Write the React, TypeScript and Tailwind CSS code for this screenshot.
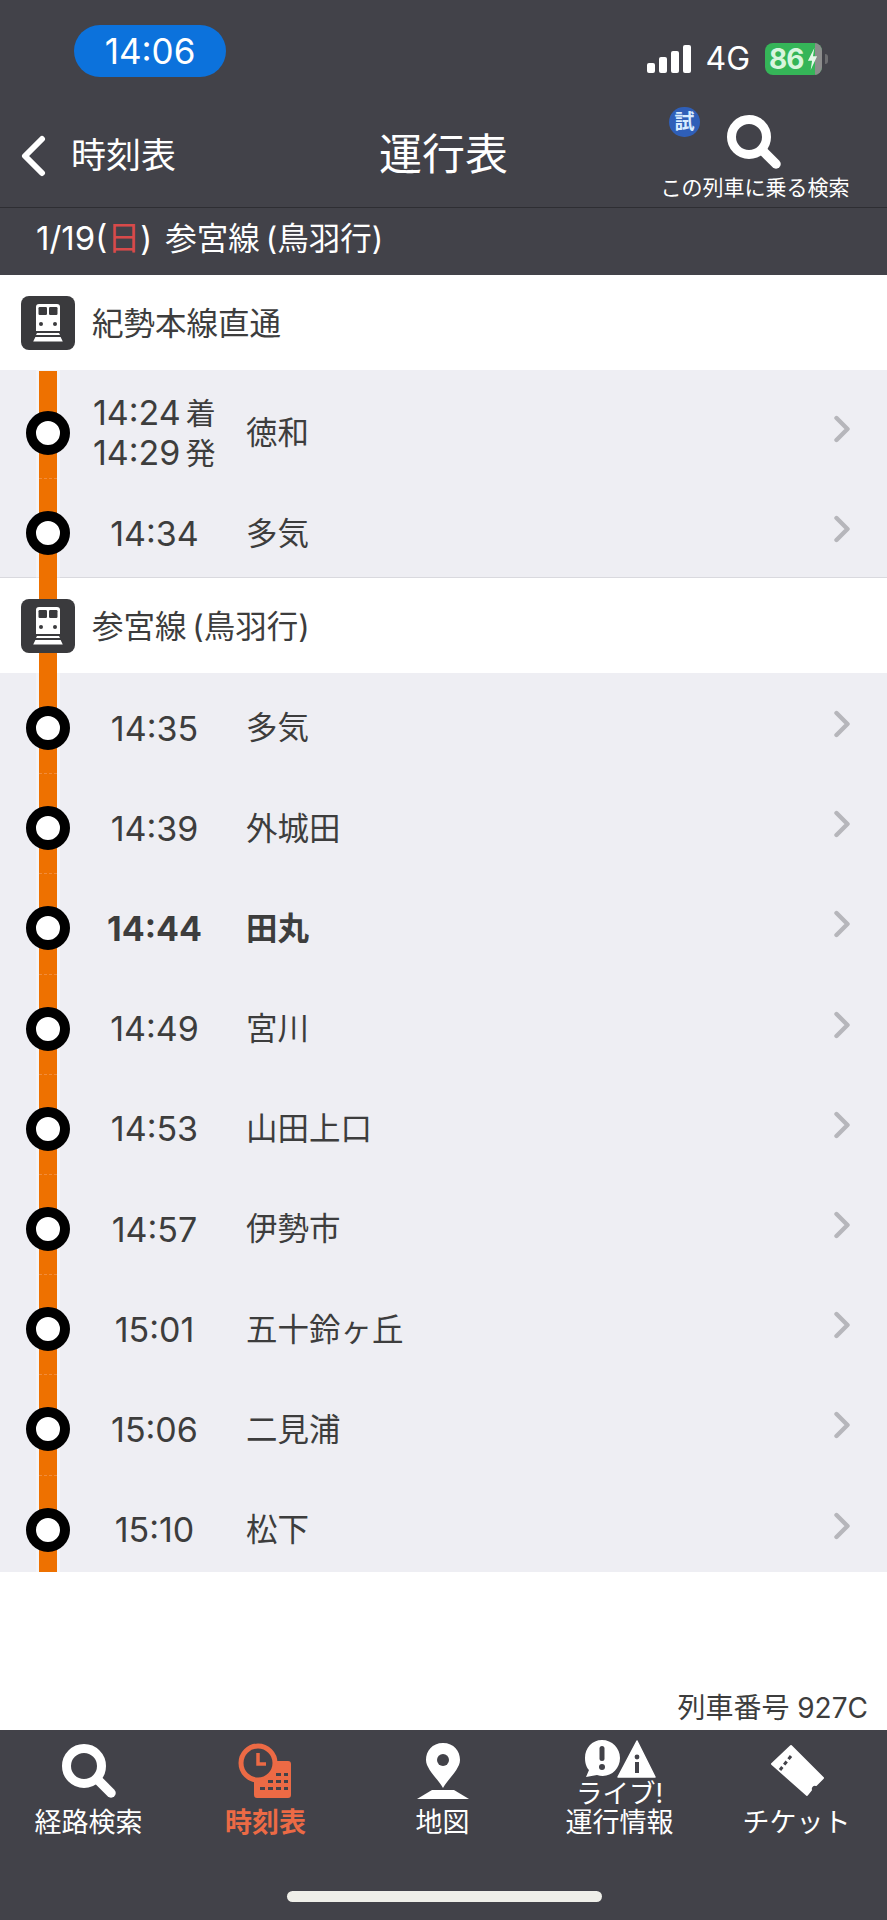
import { ReactNode } from 'react';

type Stop = { time?: string; arr?: string; dep?: string; name: string; bold?: boolean };

const firstStops: Stop[] = [
  { arr: '14:24', dep: '14:29', name: '徳和' },
  { time: '14:34', name: '多気' },
];

const secondStops: Stop[] = [
  { time: '14:35', name: '多気' },
  { time: '14:39', name: '外城田' },
  { time: '14:44', name: '田丸', bold: true },
  { time: '14:49', name: '宮川' },
  { time: '14:53', name: '山田上口' },
  { time: '14:57', name: '伊勢市' },
  { time: '15:01', name: '五十鈴ヶ丘' },
  { time: '15:06', name: '二見浦' },
  { time: '15:10', name: '松下' },
];

function SearchIcon({ className }: { className?: string }) {
  return (
    <svg viewBox="0 0 56 56" className={className}>
      <circle cx="23" cy="23" r="17.5" fill="none" stroke="#ffffff" strokeWidth="9" />
      <path d="M36 36 L50 50" stroke="#ffffff" strokeWidth="9.5" strokeLinecap="round" />
    </svg>
  );
}

function TrainIcon() {
  return (
    <div className="relative z-20 flex h-[54px] w-[54px] shrink-0 items-center justify-center rounded-[8px] bg-[#3a3a3d]">
      <svg viewBox="0 0 30 38" className="h-[38px] w-[30px]">
        <path d="M3 3a3 3 0 0 1 3-3h18a3 3 0 0 1 3 3V27H3Z" fill="#fff" />
        <rect x="5.5" y="3" width="8.5" height="8" rx="1.2" fill="#3a3a3d" />
        <rect x="16" y="3" width="8.5" height="8" rx="1.2" fill="#3a3a3d" />
        <circle cx="8" cy="20" r="2" fill="#3a3a3d" />
        <circle cx="22" cy="20" r="2" fill="#3a3a3d" />
        <path d="M4 29h22l1 2H3Z M2.4 33h25.2l2.2 4.5H0.2Z" fill="#fff" />
      </svg>
    </div>
  );
}

function Chevron() {
  return (
    <svg viewBox="0 0 18 28" className="h-[28px] w-[18px]">
      <path d="M3.5 3 L14.5 14 L3.5 25" fill="none" stroke="#b6b6bb" strokeWidth="4.4" strokeLinecap="round" strokeLinejoin="round" />
    </svg>
  );
}

function StopRow({ stop, last }: { stop: Stop; last?: boolean }) {
  const weight = stop.bold ? 'font-bold' : 'font-normal';
  return (
    <div className="relative flex h-[100.2px] items-center">
      <div className="relative z-20 ml-[26px] h-[44px] w-[44px] shrink-0 rounded-full border-[10px] border-black bg-white" />
      {!last && <div className="absolute bottom-[4px] left-[39px] z-20 w-[18px] border-t border-dashed border-[#f28c3a]" />}
      {stop.time ? (
        <div className={`w-[176px] pr-[7px] text-center text-[34px] text-[#3d3d3d] ${weight}`}>{stop.time}</div>
      ) : (
        <div className="w-[176px] pl-[23px] text-[34px] leading-[40px] text-[#3d3d3d]">
          <div className="flex gap-[5px]"><span>{stop.arr}</span><span className="text-[30px]">着</span></div>
          <div className="flex gap-[5px]"><span>{stop.dep}</span><span className="text-[30px]">発</span></div>
        </div>
      )}
      <div className={`text-[31.5px] text-[#3d3d3d] ${weight}`}>{stop.name}</div>
      <div className="ml-auto mr-[36px] -mt-[8px] flex"><Chevron /></div>
    </div>
  );
}

function LineHeader({ children }: { children: ReactNode }) {
  return (
    <div className="flex h-[95px] items-center bg-white pl-[21px]">
      <TrainIcon />
      <div className="ml-[17px] mt-[2px] text-[31.5px] text-[#3d3d3d] [word-spacing:-3px]">{children}</div>
    </div>
  );
}

function TabItem({ icon, label, active, top }: { icon: ReactNode; label: string; active?: boolean; top?: string }) {
  return (
    <div className="flex w-[177px] flex-col items-center">
      <div className={`flex items-center justify-center ${top ? '-mt-[3px] h-[38px]' : 'h-[56px]'}`}>{icon}</div>
      {top && <div className="mt-[3px] whitespace-nowrap text-[26.5px] leading-[25px] text-white">{top}</div>}
      <div className={`text-[27px] leading-[34px] ${top ? '' : 'mt-[7px]'} ${active ? 'font-bold text-[#ec6a45]' : 'text-white'}`}>{label}</div>
    </div>
  );
}

export default function App() {
  return (
    <div
      className="relative flex h-[1920px] w-[887px] flex-col overflow-hidden bg-white"
      style={{ fontFamily: 'Inter, "Noto Sans CJK JP", sans-serif' }}
    >
      {/* header */}
      <div className="h-[207px] bg-[#424249] text-white">
        <div className="flex h-[104px] items-start">
          <div className="ml-[74px] mt-[25px] flex h-[52px] w-[152px] items-center justify-center rounded-full bg-[#0c72dc] text-[35px] text-white">
            14:06
          </div>
          <div className="ml-auto mr-[59px] mt-[43px] flex items-center">
            <svg viewBox="0 0 44 28" className="h-[28px] w-[44px]">
              <rect x="0" y="18" width="8" height="10" rx="2" fill="#fff" />
              <rect x="12" y="12" width="8" height="16" rx="2" fill="#fff" />
              <rect x="24" y="6" width="8" height="22" rx="2" fill="#fff" />
              <rect x="36" y="0" width="8" height="28" rx="2" fill="#fff" />
            </svg>
            <div className="ml-[14px] text-[32px] leading-none">4G</div>
            <div className="relative ml-[15px] flex h-[32px] w-[57px] items-center overflow-hidden rounded-[8px] bg-[#35b558] pl-[4px] text-[28px] font-bold leading-none tracking-[-1px] text-[#d8f5de]">
              86
              <div className="absolute right-0 top-0 h-full w-[7px] bg-[#8c8c8c]" />
              <svg viewBox="0 0 12 24" className="absolute right-[3px] top-[5px] h-[22px] w-[13px]">
                <path d="M8 0 L1 14 H5.5 L4 24 L11 9 H6.5 Z" fill="#e4f7e8" />
              </svg>
            </div>
            <div className="ml-[3px] h-[10px] w-[3px] rounded-r-full bg-[#6d6d70]" />
          </div>
        </div>
        <div className="relative flex h-[103px] items-center">
          <svg viewBox="0 0 26 42" className="ml-[20px] h-[42px] w-[26px]">
            <path d="M22 4 L5 21 L22 38" fill="none" stroke="#fff" strokeWidth="6" strokeLinecap="round" strokeLinejoin="round" />
          </svg>
          <div className="ml-[25px] text-[35px]">時刻表</div>
          <div className="absolute left-0 right-0 top-[25px] text-center text-[43px] leading-[50px]">運行表</div>
          <div className="absolute right-[37px] top-0 flex w-[190px] flex-col items-center">
            <SearchIcon className="ml-[-2px] mt-[10px] h-[56px] w-[56px]" />
            <div className="mt-[5px] whitespace-nowrap text-[21px] leading-[26px]">この列車に乗る検索</div>
            <div className="absolute left-[9px] top-[3px] flex h-[30px] w-[31px] items-center justify-center rounded-full bg-[#2f5fb8] text-[20px] font-bold leading-none text-[#d8ecff]">
              試
            </div>
          </div>
        </div>
      </div>
      {/* date bar */}
      <div className="flex h-[68px] items-center border-t border-[#2e2e33] bg-[#424249] pb-[6px] pl-[36px] text-white">
        <span className="text-[33px]">1/19(</span>
        <span className="text-[33px] text-[#d84a4a]">日</span>
        <span className="text-[33px]">)</span>
        <span className="ml-[13px] text-[31.5px] [word-spacing:-3px]">参宮線 (鳥羽行)</span>
      </div>
      {/* timetable */}
      <div className="relative">
        <div className="absolute bottom-0 left-[39px] top-[96px] z-10 w-[18px] bg-[#ee7100] shadow-[0_0_0_3px_rgba(255,255,255,0.35)]" />
        <LineHeader>紀勢本線直通</LineHeader>
        <div className="h-[208px] border-b border-[#d9d9de] bg-[#eeeef3] pt-[13px]">
          <StopRow stop={firstStops[0]} />
          <StopRow stop={firstStops[1]} last />
        </div>
        <LineHeader>参宮線 (鳥羽行)</LineHeader>
        <div className="h-[899px] bg-[#eeeef3] pt-[5px]">
          {secondStops.map((stop, i) => (
            <StopRow key={i} stop={stop} last={i === secondStops.length - 1} />
          ))}
        </div>
      </div>
      {/* footer */}
      <div className="relative flex-1">
        <div className="absolute bottom-[4px] right-[19px] text-[28px] leading-[36px] text-[#3d3d3d]">列車番号 927C</div>
      </div>
      {/* tab bar */}
      <div className="relative h-[190px] bg-[#424249] pt-[13px]">
        <div className="flex">
          <TabItem label="経路検索" icon={<SearchIcon className="h-[56px] w-[56px]" />} />
          <TabItem
            active
            label="時刻表"
            icon={
              <svg viewBox="0 0 56 56" className="h-[56px] w-[56px]">
                <circle cx="20" cy="20" r="17" fill="none" stroke="#ec6a45" strokeWidth="5" />
                <path d="M20 10 V21 H28" fill="none" stroke="#ec6a45" strokeWidth="3.5" />
                <path d="M28 18 H50 a3 3 0 0 1 3 3 V52 a3 3 0 0 1 -3 3 H19 a3 3 0 0 1 -3 -3 V38 A19 19 0 0 0 38 18 Z" fill="#ec6a45" />
                <g fill="#424249">
                  <rect x="22" y="44" width="5" height="3" /><rect x="30" y="44" width="5" height="3" /><rect x="38" y="44" width="5" height="3" /><rect x="46" y="44" width="4" height="3" />
                  <rect x="30" y="37" width="5" height="3" /><rect x="38" y="37" width="5" height="3" /><rect x="46" y="37" width="4" height="3" />
                  <rect x="38" y="30" width="5" height="3" /><rect x="46" y="30" width="4" height="3" />
                </g>
              </svg>
            }
          />
          <TabItem
            label="地図"
            icon={
              <svg viewBox="0 0 54 56" className="h-[56px] w-[54px]">
                <path d="M27 0 C16 0 10 8 10 17 C10 26 22 36 27 45 C32 36 44 26 44 17 C44 8 38 0 27 0 Z" fill="#fff" />
                <circle cx="27" cy="17" r="6" fill="#424249" />
                <path d="M16 47 H38 L53 56 H1 Z" fill="#fff" />
              </svg>
            }
          />
          <TabItem
            label="運行情報"
            top="ライブ!"
            icon={
              <svg viewBox="0 0 72 38" className="h-[38px] w-[72px]">
                <path d="M18 0 C8 0 1 8 1 18 C1 24 3 28 5 30 L2 37 L13 35 C25 39 36 30 36 18 C36 8 28 0 18 0 Z" fill="#fff" />
                <rect x="15.5" y="6" width="5" height="15" rx="2.5" fill="#424249" />
                <circle cx="18" cy="27" r="3" fill="#424249" />
                <path d="M53 1 L71 37 H34 Z" fill="#fff" stroke="#fff" strokeWidth="1.5" strokeLinejoin="round" />
                <circle cx="53" cy="17" r="2.4" fill="#424249" />
                <rect x="51" y="22" width="4" height="11" fill="#424249" />
              </svg>
            }
          />
          <TabItem
            label="チケット"
            icon={
              <svg viewBox="0 0 56 56" className="h-[56px] w-[56px]">
                <path d="M22 3 L54 35 L47 42 A4 4 0 0 0 42 47 L38 52 L3 21 Z" fill="#fff" stroke="#fff" strokeWidth="2" strokeLinejoin="round" />
                <path d="M22 13 L11 27" stroke="#424249" strokeWidth="3" strokeDasharray="4 3" />
              </svg>
            }
          />
        </div>
        <div className="absolute bottom-[18px] left-[287px] h-[11px] w-[315px] rounded-full bg-[#efefe9]" />
      </div>
    </div>
  );
}
